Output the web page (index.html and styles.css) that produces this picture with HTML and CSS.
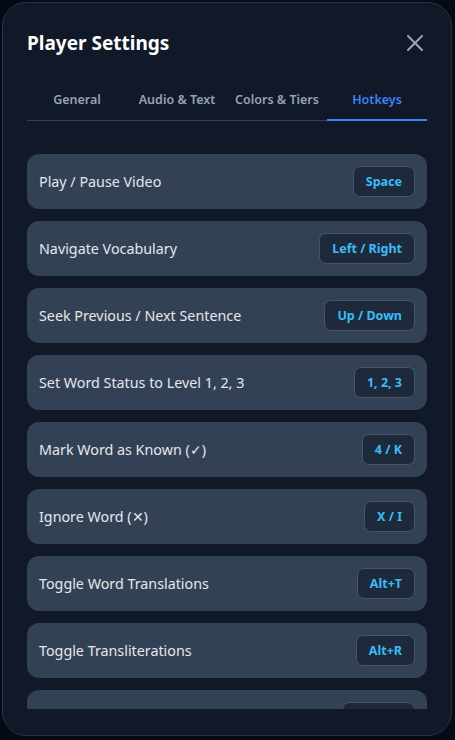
FILE: index.html
```html
<!DOCTYPE html>
<html>
<head>
<meta charset="utf-8">
<link rel="stylesheet" href="styles.css">
</head>
<body>
<div class="modal">
  <div class="header">
    <h1 class="title">Player Settings</h1>
    <button class="close" aria-label="Close">
      <svg width="16" height="16" viewBox="0 0 16 16"><path d="M1 1 L15 15 M15 1 L1 15" stroke="#9ca3af" stroke-width="2" stroke-linecap="round"/></svg>
    </button>
  </div>
  <div class="tabs">
    <div class="tab">General</div>
    <div class="tab">Audio &amp; Text</div>
    <div class="tab">Colors &amp; Tiers</div>
    <div class="tab active">Hotkeys</div>
  </div>
  <div class="content">
    <div class="row"><span class="label">Play / Pause Video</span><span class="key">Space</span></div>
    <div class="row"><span class="label">Navigate Vocabulary</span><span class="key">Left / Right</span></div>
    <div class="row"><span class="label">Seek Previous / Next Sentence</span><span class="key">Up / Down</span></div>
    <div class="row"><span class="label">Set Word Status to Level 1, 2, 3</span><span class="key">1, 2, 3</span></div>
    <div class="row"><span class="label">Mark Word as Known (✓)</span><span class="key">4 / K</span></div>
    <div class="row"><span class="label">Ignore Word (✕)</span><span class="key">X / I</span></div>
    <div class="row"><span class="label">Toggle Word Translations</span><span class="key">Alt+T</span></div>
    <div class="row"><span class="label">Toggle Transliterations</span><span class="key">Alt+R</span></div>
    <div class="row"><span class="label"></span><span class="key key-empty"></span></div>
  </div>
</div>
</body>
</html>
```
FILE: styles.css
```css
html, body {
  margin: 0;
  padding: 0;
  height: 100%;
}
body {
  background: #060a14;
  font-family: "Noto Sans", "Open Sans", sans-serif;
  padding: 2px 3px 4px 2px;
  box-sizing: border-box;
}
.modal {
  box-sizing: border-box;
  height: 734px;
  background: #111827;
  border: 1px solid #273244;
  border-radius: 24px;
  padding: 22px 24px 26px 24px;
  display: flex;
  flex-direction: column;
  overflow: hidden;
}
.header {
  display: flex;
  align-items: center;
  justify-content: space-between;
  height: 36px;
}
.title {
  margin: 0;
  font-size: 19px;
  font-weight: 700;
  color: #ffffff;
}
.close {
  background: none;
  border: none;
  padding: 0;
  margin-right: 4px;
  display: flex;
}
.tabs {
  display: grid;
  grid-template-columns: repeat(4, 1fr);
  border-bottom: 1px solid #334155;
  margin-top: 20px;
}
.tab {
  text-align: center;
  font-size: 12.5px;
  font-weight: 600;
  color: #94a3b8;
  padding: 10px 0 10px;
  line-height: 18px;
  border-bottom: 2px solid transparent;
  margin-bottom: -1px;
}
.tab.active {
  color: #3b82f6;
  border-bottom-color: #3b82f6;
}
.content {
  flex: 1;
  overflow: hidden;
  padding-top: 33px;
  display: flex;
  flex-direction: column;
  gap: 12px;
}
.row {
  flex-shrink: 0;
  display: flex;
  align-items: center;
  justify-content: space-between;
  background: #334155;
  border-radius: 12px;
  padding: 12px 12px 12px 12px;
  min-height: 31px;
}
.label {
  font-size: 14.3px;
  color: #e5e7eb;
}
.key {
  background: #1e293b;
  border: 1px solid #475569;
  border-radius: 7px;
  padding: 6px 12px;
  line-height: 17px;
  font-size: 12.5px;
  font-weight: 700;
  color: #38bdf8;
}
.key-empty {
  width: 47px;
  height: 17px;
}
```
